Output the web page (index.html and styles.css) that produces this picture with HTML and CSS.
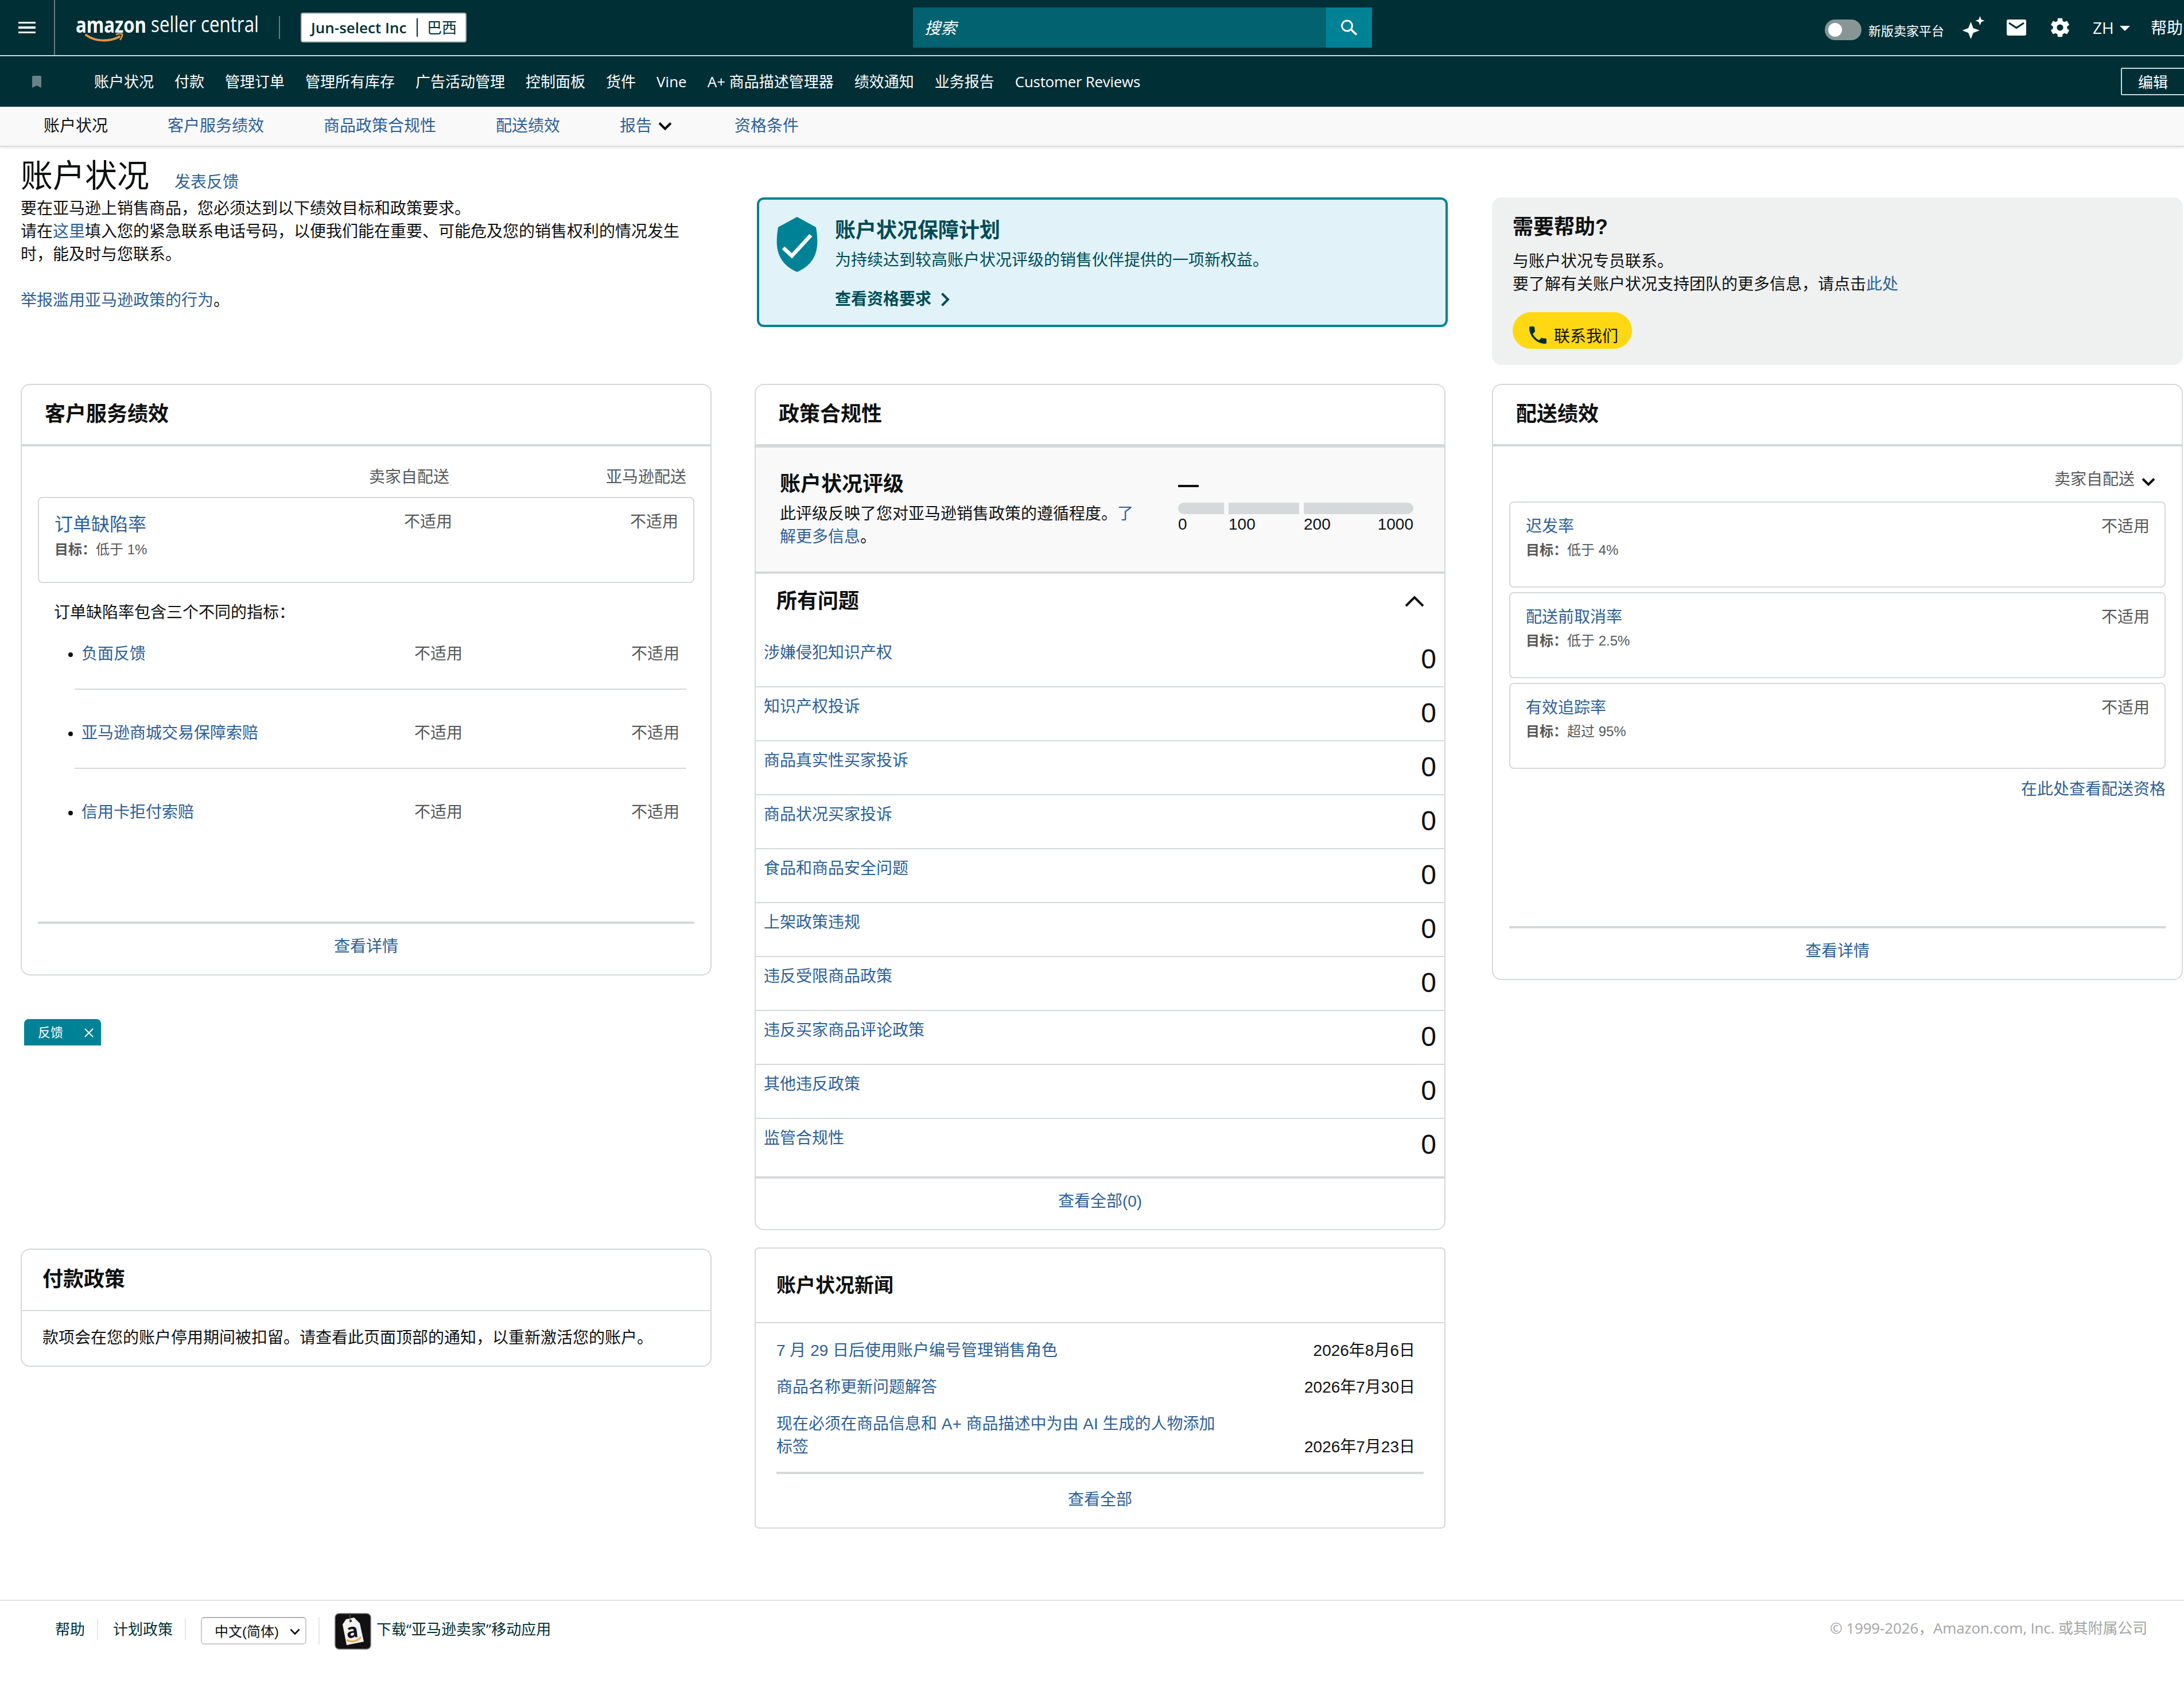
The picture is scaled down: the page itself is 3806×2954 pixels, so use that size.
FILE: index.html
```html
<!DOCTYPE html>
<html lang="zh-CN">

<head>
    <meta charset="UTF-8">
    <meta name="viewport" content="width=device-width, initial-scale=1.0">
    <title>账户状况</title>
    <link rel="stylesheet" href="styles.css">
</head>

<body>
    <header class="topbar">
        <button class="menu-btn" aria-label="menu"><span></span><span></span><span></span></button>
        <svg class="logo" viewBox="0 0 320 72" width="320" height="72">
            <text class="logo-bold" x="0" y="49" textLength="123" lengthAdjust="spacingAndGlyphs">amazon</text>
            <text class="logo-light" x="131" y="48" textLength="188" lengthAdjust="spacingAndGlyphs">seller central</text>
            <path d="M18 53c16 12 41 12 58 3" fill="none" stroke="#e8943a" stroke-width="4" stroke-linecap="round" />
            <path d="M70 52.500c4-2 8-2 11-1 0 3-1 7-4 10" fill="none" stroke="#e8943a" stroke-width="2.600" />
        </svg>
        <span class="top-divider"></span>
        <div class="account-switch"><b>Jun-select Inc</b><i></i><span>巴西</span></div>
        <div class="search">
            <div class="search-input">搜索</div>
            <button class="search-btn" aria-label="search">
                <svg viewBox="0 0 30 28" width="30" height="28" fill="none" stroke="#fff">
                    <circle cx="11.500" cy="11" r="9" stroke-width="3" />
                    <path d="M18 17l10 9.500" stroke-width="3.600" />
                </svg>
            </button>
        </div>
        <div class="top-right">
            <span class="toggle"></span>
            <span class="toggle-label">新版卖家平台</span>
            <svg class="ico-spark" viewBox="0 0 40 40" width="40" height="40" fill="#fff">
                <path d="M15.500 10l4.300 11 11 4-11 4.300L15.500 40l-4.300-10.700L.5 25l10.700-4zM31.500 0l2.200 6 5.800 2-5.800 2.200-2.200 6-2.200-6L23.500 8l5.800-2z" />
            </svg>
            <svg class="ico-mail" viewBox="0 0 34 28" width="34" height="28">
                <rect width="34" height="28" rx="3" fill="#fff" />
                <path d="M4 6l13 8.500L30 6" fill="none" stroke="#002f36" stroke-width="3.200" />
            </svg>
            <svg class="ico-gear" viewBox="2 2 20 20" width="34" height="34" fill="#fff">
                <path d="M19.140 12.940c.04-.3.060-.61.060-.94 0-.32-.02-.64-.07-.94l2.030-1.580c.18-.14.230-.41.120-.61l-1.920-3.320c-.12-.22-.37-.29-.59-.22l-2.390.96c-.5-.38-1.030-.7-1.620-.94L14.400 2.810c-.04-.24-.24-.41-.48-.41h-3.840c-.24 0-.43.170-.47.410L9.250 5.350C8.660 5.590 8.120 5.920 7.630 6.290L5.240 5.330c-.22-.08-.47 0-.59.220L2.740 8.870c-.12.210-.08.470.12.610l2.030 1.580C4.840 11.360 4.800 11.690 4.800 12s.02.640.070.940l-2.030 1.580c-.18.140-.23.410-.12.610l1.920 3.320c.12.220.37.290.59.220l2.390-.96c.5.380 1.030.7 1.620.94l.36 2.540c.05.240.24.410.48.410h3.840c.24 0 .44-.17.470-.41l.36-2.540c.59-.24 1.130-.56 1.620-.94l2.390.96c.22.080.47 0 .59-.22l1.920-3.320c.12-.22.070-.47-.12-.61zM12 15.300a3.300 3.300 0 1 1 0-6.600 3.300 3.300 0 0 1 0 6.600z" />
            </svg>
            <span class="lang">ZH</span>
            <span class="caret"></span>
            <span class="help">帮助</span>
        </div>
    </header>

    <nav class="navbar">
        <svg class="bookmark" viewBox="0 0 16 21" width="16" height="21"><path d="M2 0h12a2 2 0 0 1 2 2v19l-8-4-8 4V2a2 2 0 0 1 2-2z" fill="#668286" /></svg>
        <a>账户状况</a><a>付款</a><a>管理订单</a><a>管理所有库存</a><a>广告活动管理</a><a>控制面板</a><a>货件</a><a>Vine</a><a>A+ 商品描述管理器</a><a>绩效通知</a><a>业务报告</a><a class="latin">Customer Reviews</a>
        <button class="edit-btn">编辑</button>
    </nav>

    <nav class="subnav">
        <a class="current">账户状况</a>
        <a>客户服务绩效</a>
        <a>商品政策合规性</a>
        <a>配送绩效</a>
        <a>报告<svg viewBox="0 0 24 16" width="24" height="16"><path d="M2 2.500l10 10 10-10" fill="none" stroke="#0f1111" stroke-width="4" /></svg></a>
        <a>资格条件</a>
    </nav>

    <main class="page">
        <!-- 左列 -->
        <div class="col">
            <section class="intro">
                <div class="intro-title">
                    <h1>账户状况</h1>
                    <a>发表反馈</a>
                </div>
                <p>要在亚马逊上销售商品，您必须达到以下绩效目标和政策要求。</p>
                <p>请在<a>这里</a>填入您的紧急联系电话号码，以便我们能在重要、可能危及您的销售权利的情况发生时，能及时与您联系。</p>
                <p class="report"><a>举报滥用亚马逊政策的行为</a>。</p>
            </section>

            <section class="card service">
                <h2>客户服务绩效</h2>
                <div class="card-body">
                    <div class="service-head"><span>卖家自配送</span><span>亚马逊配送</span></div>
                    <div class="metric odr">
                        <div>
                            <a>订单缺陷率</a>
                            <small><b>目标：</b>低于 1%</small>
                        </div>
                        <span>不适用</span>
                        <span>不适用</span>
                    </div>
                    <p class="odr-note">订单缺陷率包含三个不同的指标：</p>
                    <ul>
                        <li><a>负面反馈</a><span>不适用</span><span>不适用</span></li>
                        <li><a>亚马逊商城交易保障索赔</a><span>不适用</span><span>不适用</span></li>
                        <li><a>信用卡拒付索赔</a><span>不适用</span><span>不适用</span></li>
                    </ul>
                    <div class="card-foot"><a>查看详情</a></div>
                </div>
            </section>

            <div class="feedback-tab">
                <span>反馈</span>
                <svg viewBox="0 0 16 16" width="16" height="16"><path d="M1 1l14 14M15 1L1 15" stroke="#fff" stroke-width="2" /></svg>
            </div>

            <section class="card payment">
                <h2>付款政策</h2>
                <p>款项会在您的账户停用期间被扣留。请查看此页面顶部的通知，以重新激活您的账户。</p>
            </section>
        </div>

        <!-- 中列 -->
        <div class="col">
            <div class="banner">
                <svg class="shield" viewBox="0 0 72 96" width="72" height="96">
                    <path d="M36 0l33 18c6 36 2 62-33 78C1 80-3 54 3 18z" fill="#008296" />
                    <path d="M12 54l15 14 33-36" fill="none" stroke="#fff" stroke-width="6.500" />
                </svg>
                <div>
                    <h3>账户状况保障计划</h3>
                    <p>为持续达到较高账户状况评级的销售伙伴提供的一项新权益。</p>
                    <a>查看资格要求<svg viewBox="0 0 16 24" width="16" height="24"><path d="M2.500 1.500L13 12 2.500 22.500" fill="none" stroke="#004b57" stroke-width="4" /></svg></a>
                </div>
            </div>

            <section class="card policy">
                <h2>政策合规性</h2>
                <div class="rating">
                    <div class="rating-text">
                        <h3>账户状况评级</h3>
                        <p>此评级反映了您对亚马逊销售政策的遵循程度。<a>了解更多信息</a>。</p>
                    </div>
                    <div class="gauge">
                        <div class="dash"></div>
                        <div class="gauge-bar"><i></i><i></i><i></i></div>
                        <div class="gauge-scale"><span>0</span><span>100</span><span>200</span><span>1000</span></div>
                    </div>
                </div>
                <div class="issues-title">
                    <h3>所有问题</h3>
                    <svg viewBox="0 0 34 20" width="34" height="20"><path d="M2 18L17 3l15 15" fill="none" stroke="#0f1111" stroke-width="4" /></svg>
                </div>
                <div class="issue"><a>涉嫌侵犯知识产权</a><span>0</span></div>
                <div class="issue"><a>知识产权投诉</a><span>0</span></div>
                <div class="issue"><a>商品真实性买家投诉</a><span>0</span></div>
                <div class="issue"><a>商品状况买家投诉</a><span>0</span></div>
                <div class="issue"><a>食品和商品安全问题</a><span>0</span></div>
                <div class="issue"><a>上架政策违规</a><span>0</span></div>
                <div class="issue"><a>违反受限商品政策</a><span>0</span></div>
                <div class="issue"><a>违反买家商品评论政策</a><span>0</span></div>
                <div class="issue"><a>其他违反政策</a><span>0</span></div>
                <div class="issue"><a>监管合规性</a><span>0</span></div>
                <div class="card-foot"><a>查看全部(0)</a></div>
            </section>

            <section class="card news">
                <h2>账户状况新闻</h2>
                <div class="news-body">
                    <div class="news-item"><a>7 月 29 日后使用账户编号管理销售角色</a><span>2026年8月6日</span></div>
                    <div class="news-item"><a>商品名称更新问题解答</a><span>2026年7月30日</span></div>
                    <div class="news-item"><a>现在必须在商品信息和 A+ 商品描述中为由 AI 生成的人物添加标签</a><span>2026年7月23日</span></div>
                    <div class="card-foot"><a>查看全部</a></div>
                </div>
            </section>
        </div>

        <!-- 右列 -->
        <div class="col">
            <section class="need-help">
                <h3>需要帮助?</h3>
                <p>与账户状况专员联系。</p>
                <p>要了解有关账户状况支持团队的更多信息，请点击<a>此处</a></p>
                <button class="contact-btn">
                    <svg viewBox="3 3 18 18" width="30" height="30"><path d="M6.620 10.790c1.440 2.830 3.760 5.140 6.590 6.590l2.200-2.200c.27-.27.670-.36 1.020-.24 1.120.37 2.330.57 3.570.57.550 0 1 .45 1 1V20c0 .55-.45 1-1 1-9.390 0-17-7.610-17-17 0-.55.450-1 1-1h3.500c.55 0 1 .45 1 1 0 1.250.2 2.450.57 3.570.110.350.030.740-.25 1.020l-2.200 2.200z" fill="#002f36" /></svg>
                    联系我们
                </button>
            </section>

            <section class="card shipping">
                <h2>配送绩效</h2>
                <div class="card-body">
                    <div class="ship-select">卖家自配送<svg viewBox="0 0 24 16" width="24" height="16"><path d="M2 2.500l10 10 10-10" fill="none" stroke="#0f1111" stroke-width="4" /></svg></div>
                    <div class="metric">
                        <div><a>迟发率</a><small><b>目标：</b>低于 4%</small></div>
                        <span>不适用</span>
                    </div>
                    <div class="metric">
                        <div><a>配送前取消率</a><small><b>目标：</b>低于 2.5%</small></div>
                        <span>不适用</span>
                    </div>
                    <div class="metric">
                        <div><a>有效追踪率</a><small><b>目标：</b>超过 95%</small></div>
                        <span>不适用</span>
                    </div>
                    <a class="eligibility">在此处查看配送资格</a>
                    <div class="card-foot"><a>查看详情</a></div>
                </div>
            </section>
        </div>
    </main>

    <footer class="footer">
        <a>帮助</a>
        <a>计划政策</a>
        <div class="lang-wrap">
            <div class="lang-select">中文(简体)<svg viewBox="0 0 18 12" width="18" height="12"><path d="M1.500 1.500L9 9.500l7.500-8" fill="none" stroke="#0f1111" stroke-width="2.600" /></svg></div>
        </div>
        <svg class="app-icon" viewBox="0 0 64 64" width="64" height="64">
            <rect x="1" y="1" width="62" height="62" rx="7" fill="#111" stroke="#777" stroke-width="1.500" />
            <path d="M20 11l14-3 10 10 7 32-30 6-7-36z" fill="#f2f2f2" />
            <circle cx="28" cy="14" r="2.200" fill="#333" />
            <path d="M27 0v13" stroke="#555" stroke-width="1.500" />
            <text class="app-letter" x="21" y="43" transform="rotate(-7 32 36)">a</text>
            <path d="M21 47c8 5 18 3 25-5" fill="none" stroke="#f0a040" stroke-width="3" />
        </svg>
        <span class="app-text">下载“亚马逊卖家”移动应用</span>
        <span class="copyright">© 1999-2026，Amazon.com, Inc. 或其附属公司</span>
    </footer>
</body>

</html>
```
FILE: styles.css
```css
* {
    margin: 0;
    padding: 0;
    box-sizing: border-box
}

body {
    font-family: "Liberation Sans", "Noto Sans CJK SC", sans-serif;
    font-size: 28px;
    line-height: 40px;
    color: #0f1111;
    background: #fff;
    overflow-x: hidden
}

a {
    color: #2e5f98;
    text-decoration: none
}

button {
    border: none;
    font: inherit;
    color: inherit
}

ul {
    list-style: none
}

svg {
    display: block;
    flex-shrink: 0
}

/* 顶栏 */
.topbar {
    height: 98px;
    background: #002f36;
    border-bottom: 2px solid #cbd9da;
    display: flex;
    color: #fff;
    overflow: hidden;
    font-family: "Open Sans", "Noto Sans CJK SC", sans-serif
}

.topbar > * {
    flex-shrink: 0
}

.menu-btn {
    width: 96px;
    background: none;
    border-right: 2px solid #667c7f;
    padding: 38px 32px 0;
    display: flex;
    flex-direction: column;
    gap: 5px
}

.menu-btn span {
    width: 30px;
    height: 3.4px;
    background: #fff
}

.logo {
    margin: 8px 0 0 36px;
    overflow: visible
}

.logo text {
    fill: #fff;
    font-size: 38px
}

.logo-bold {
    font-weight: 700
}

.logo-light {
    font-weight: 400
}

.top-divider {
    width: 2px;
    height: 40px;
    margin: 28px 0 0 34px;
    background: #667c7f
}

.account-switch {
    display: flex;
    align-items: center;
    width: 289px;
    height: 52px;
    margin: 22px 0 0 36px;
    padding-left: 16px;
    background: #fff;
    border: 2px solid #aab7b8;
    border-radius: 4px;
    color: #002f36;
    font-size: 26px
}

.account-switch b {
    width: 168px;
    white-space: nowrap;
    font-weight: 600
}

.account-switch i {
    width: 2px;
    height: 32px;
    margin: 0 16px 0 16px;
    background: #002f36
}

.search {
    display: flex;
    width: 800px;
    height: 70px;
    margin: 13px 0 0 778px
}

.search-input {
    flex: 1;
    background: #02626f;
    padding: 15px 20px;
    font-style: italic
}

.search-btn {
    width: 80px;
    background: #008296;
    display: flex;
    align-items: center;
    justify-content: center
}

.top-right {
    display: flex;
    align-items: center;
    height: 96px;
    margin-left: 789px;
    white-space: nowrap
}

.toggle {
    width: 64px;
    height: 36px;
    margin-top: 7px;
    border-radius: 18px;
    background: #879596;
    padding: 6px
}

.toggle::before {
    content: '';
    display: block;
    width: 24px;
    height: 24px;
    border-radius: 50%;
    background: #fff
}

.toggle-label {
    font-size: 22px;
    margin: 10px 31px 0 12px
}

.ico-mail {
    margin-left: 38px
}

.ico-gear {
    margin-left: 42px
}

.lang {
    width: 38px;
    margin-left: 40px
}

.caret {
    border: 9px solid transparent;
    border-top: 9px solid #fff;
    border-bottom: none;
    margin: 2px 36px 0 9px
}

/* 收藏导航 */
.navbar {
    display: flex;
    align-items: center;
    height: 88px;
    background: #002f36;
    font-family: "Open Sans", "Noto Sans CJK SC", sans-serif;
    font-size: 26px;
    overflow: hidden;
    white-space: nowrap
}

.navbar a {
    color: #fff;
    margin-right: 36px;
    padding-bottom: 1px
}

.navbar .latin {
    letter-spacing: -.3px
}

.bookmark {
    margin: 0 92px 0 56px
}

.edit-btn {
    width: 120px;
    height: 48px;
    margin: 0 -10px 0 auto;
    border: 2px solid #cbd9da;
    border-radius: 2px;
    background: none;
    color: #fff;
    padding: 1px 0 0 28px;
    text-align: left
}

.subnav {
    display: flex;
    gap: 104px;
    height: 70px;
    padding: 14px 76px 0;
    background: #f9f9f9;
    border-bottom: 2px solid #ddd;
    box-shadow: 0 2px 4px rgba(0, 0, 0, .08)
}

.subnav a {
    display: flex
}

.subnav .current {
    color: #0f1111
}

.subnav svg {
    margin: 12px 5px 0 11px
}

/* 主体三列 */
.page {
    display: flex;
    height: 2532px;
    padding-left: 36px
}

.col {
    width: 1204px;
    flex-shrink: 0;
    margin-right: 75px
}

.col:nth-child(2) {
    margin-right: 81px
}

.col:last-child {
    margin-right: 0
}

.intro {
    height: 413px;
    padding-top: 15px
}

.intro-title {
    display: flex;
    height: 73px
}

.intro h1 {
    font-size: 56px;
    line-height: 72px;
    font-weight: 400
}

.intro-title a {
    margin: 27px 0 0 44px
}

.report {
    margin-top: 40px
}

.card {
    border: 2px solid #d5d9d9;
    border-radius: 16px;
    background: #fff
}

.card h2 {
    height: 107px;
    padding-left: 40px;
    border-bottom: 4px solid #d5d9d9;
    font-size: 36px;
    line-height: 101px
}

.card-foot {
    margin-top: auto;
    height: 92px;
    padding-top: 20px;
    border-top: 4px solid #d5d9d9;
    text-align: center
}

.card-body {
    display: flex;
    flex-direction: column;
    padding: 34px 28px 0;
    color: #565959
}

.service,
.shipping {
    display: flex;
    flex-direction: column
}

.service .card-body,
.shipping .card-body {
    flex: 1
}

.service {
    height: 1031px
}

.service-head {
    display: grid;
    grid-template-columns: 1fr 413px;
    text-align: right;
    padding-right: 14px
}

.metric {
    display: flex;
    height: 150px;
    padding: 22px 26px 0 27px;
    border: 2px solid #d5d9d9;
    border-radius: 8px
}

.metric > div {
    flex: 1
}

.metric a {
    display: block
}

.metric small {
    display: block;
    font-size: 24px;
    line-height: 36px;
    margin-top: 3px
}

.odr {
    margin-top: 14px
}

.odr a {
    font-size: 32px;
    line-height: 48px
}

.odr small {
    margin-top: 2px
}

.odr span:last-child {
    width: 394px;
    text-align: right
}

.odr-note {
    margin: 32px 0 0 28px;
    color: #0f1111
}

.service ul {
    margin: 32px 14px 0 64px
}

.service li {
    position: relative;
    display: grid;
    grid-template-columns: 1fr 110px 378px;
    height: 82px;
    padding: 0 12px;
    border-bottom: 2px solid #d5d9d9;
    text-align: right
}

.service li + li {
    height: 138px;
    padding-top: 56px
}

.service li:last-child {
    border-bottom: none
}

.service li a {
    text-align: left
}

.service li::before {
    content: '';
    position: absolute;
    left: -11px;
    bottom: 55px;
    width: 8px;
    height: 8px;
    border-radius: 50%;
    background: #0f1111
}

.service li:last-child::before {
    bottom: 57px
}

.feedback-tab {
    display: flex;
    align-items: center;
    justify-content: space-between;
    width: 134px;
    height: 46px;
    margin: 76px 0 354px 6px;
    padding: 1px 13px 0 24px;
    background: #008296;
    border-radius: 8px 8px 0 0;
    color: #fff;
    font-size: 22px
}

.payment {
    height: 206px
}

.payment h2 {
    padding-left: 36px;
    border-bottom-width: 2px;
    line-height: 103px
}

.payment p {
    padding: 27px 36px 0
}

/* 保障计划横幅 */
.banner {
    display: flex;
    height: 226px;
    margin: 88px -4px 99px 4px;
    padding: 30px 30px 0;
    background: #e1f3f8;
    border: 4px solid #008296;
    border-radius: 12px;
    color: #004b57
}

.banner > div {
    margin: 1px 0 0 30px
}

.banner h3 {
    font-size: 36px;
    line-height: 46px
}

.banner p {
    margin-top: 9px
}

.banner a {
    display: flex;
    align-items: center;
    gap: 16px;
    margin-top: 28px;
    color: #004b57;
    font-weight: 700
}

.policy {
    height: 1475px
}

.policy h2 {
    height: 109px;
    border-bottom-width: 6px
}

.rating {
    display: flex;
    height: 220px;
    padding: 36px 54px 0 42px;
    background: #f9f9f9;
    border-bottom: 4px solid #d5d9d9
}

.rating-text {
    width: 640px;
    margin-right: 54px
}

.rating h3 {
    font-size: 36px;
    line-height: 56px;
    margin-bottom: 4px
}

.rating-text p {
    width: 624px
}

.gauge {
    width: 410px
}

.dash {
    width: 36px;
    height: 4px;
    margin-top: 29px;
    background: #0f1111
}

.gauge-bar {
    display: grid;
    grid-template-columns: 80px 123px 1fr;
    gap: 8px;
    height: 20px;
    margin-top: 27px;
    border-radius: 10px;
    overflow: hidden
}

.gauge-bar i {
    background: #d5d9d9
}

.gauge-scale {
    display: grid;
    grid-template-columns: 88px 131px 1fr auto;
    margin-top: -2px
}

.issues-title {
    display: flex;
    justify-content: space-between;
    height: 104px;
    padding: 27px 35px 0 36px
}

.issues-title h3 {
    font-size: 36px;
    line-height: 42px
}

.issues-title svg {
    margin-top: 11px
}

.issue {
    display: flex;
    justify-content: space-between;
    height: 94px;
    padding: 14px 14px 0;
    border-bottom: 2px solid #d5d9d9
}

.issue span {
    font-size: 48px;
    line-height: 62px
}

.issue:nth-last-child(2) {
    height: 100px;
    border-bottom: none
}

.news {
    height: 490px;
    margin-top: 30px;
    border-radius: 8px
}

.news h2 {
    height: 130px;
    padding-left: 36px;
    border-bottom-width: 2px;
    font-size: 34px;
    line-height: 128px
}

.news-body {
    padding: 28px 36px 0
}

.news-item {
    display: flex;
    justify-content: space-between;
    align-items: flex-end;
    margin-bottom: 24px;
    padding-right: 15px
}

.news-item a {
    width: 780px
}

.news .card-foot {
    margin-top: -1px;
    padding-top: 25px
}

.need-help {
    height: 292px;
    margin: 88px 0 33px;
    padding: 29px 36px 0;
    border-radius: 16px;
    background: #eff1f1
}

.need-help h3 {
    font-size: 36px;
    line-height: 46px;
    margin-bottom: 17px
}

.contact-btn {
    display: flex;
    gap: 13px;
    width: 208px;
    height: 64px;
    margin-top: 28px;
    padding: 23px 0 0 29px;
    border-radius: 32px;
    background: #ffd814
}

.contact-btn svg {
    margin-top: 2px
}

.shipping {
    height: 1039px
}

.ship-select {
    display: flex;
    justify-content: flex-end;
    padding: 4px 18px 18px 0
}

.ship-select svg {
    margin: 16px 0 0 12px
}

.shipping .metric {
    margin-bottom: 8px
}

.eligibility {
    margin-top: 8px;
    text-align: right
}

.footer {
    display: flex;
    height: 166px;
    border-top: 2px solid #e7e7e7;
    padding: 21px 64px 0 96px;
    font-family: "Open Sans", "Noto Sans CJK SC", sans-serif;
    font-size: 26px;
    color: #002f36
}

.footer > a {
    height: 38px;
    line-height: 36px;
    margin: 10px 26px 0 0;
    padding-right: 21px;
    border-right: 2px solid #e7e7e7;
    color: #002f36
}

.lang-wrap {
    height: 48px;
    margin: 7px 26px 0 0;
    padding-right: 21px;
    border-right: 2px solid #e7e7e7
}

.lang-select {
    display: flex;
    align-items: center;
    justify-content: space-between;
    width: 184px;
    height: 48px;
    padding: 3px 9px 0 22px;
    border: 2px solid #ccc;
    border-top-color: #b3b3b3;
    border-radius: 6px;
    font-family: "Liberation Sans", "Noto Sans CJK SC", sans-serif;
    font-size: 24px;
    color: #0f1111
}

.app-letter {
    font-size: 34px;
    font-weight: 700;
    fill: #111
}

.app-text {
    margin: 8px 0 0 9px
}

.copyright {
    margin: 6px 0 0 auto;
    letter-spacing: -.15px;
    color: #a3a5a5
}
```
